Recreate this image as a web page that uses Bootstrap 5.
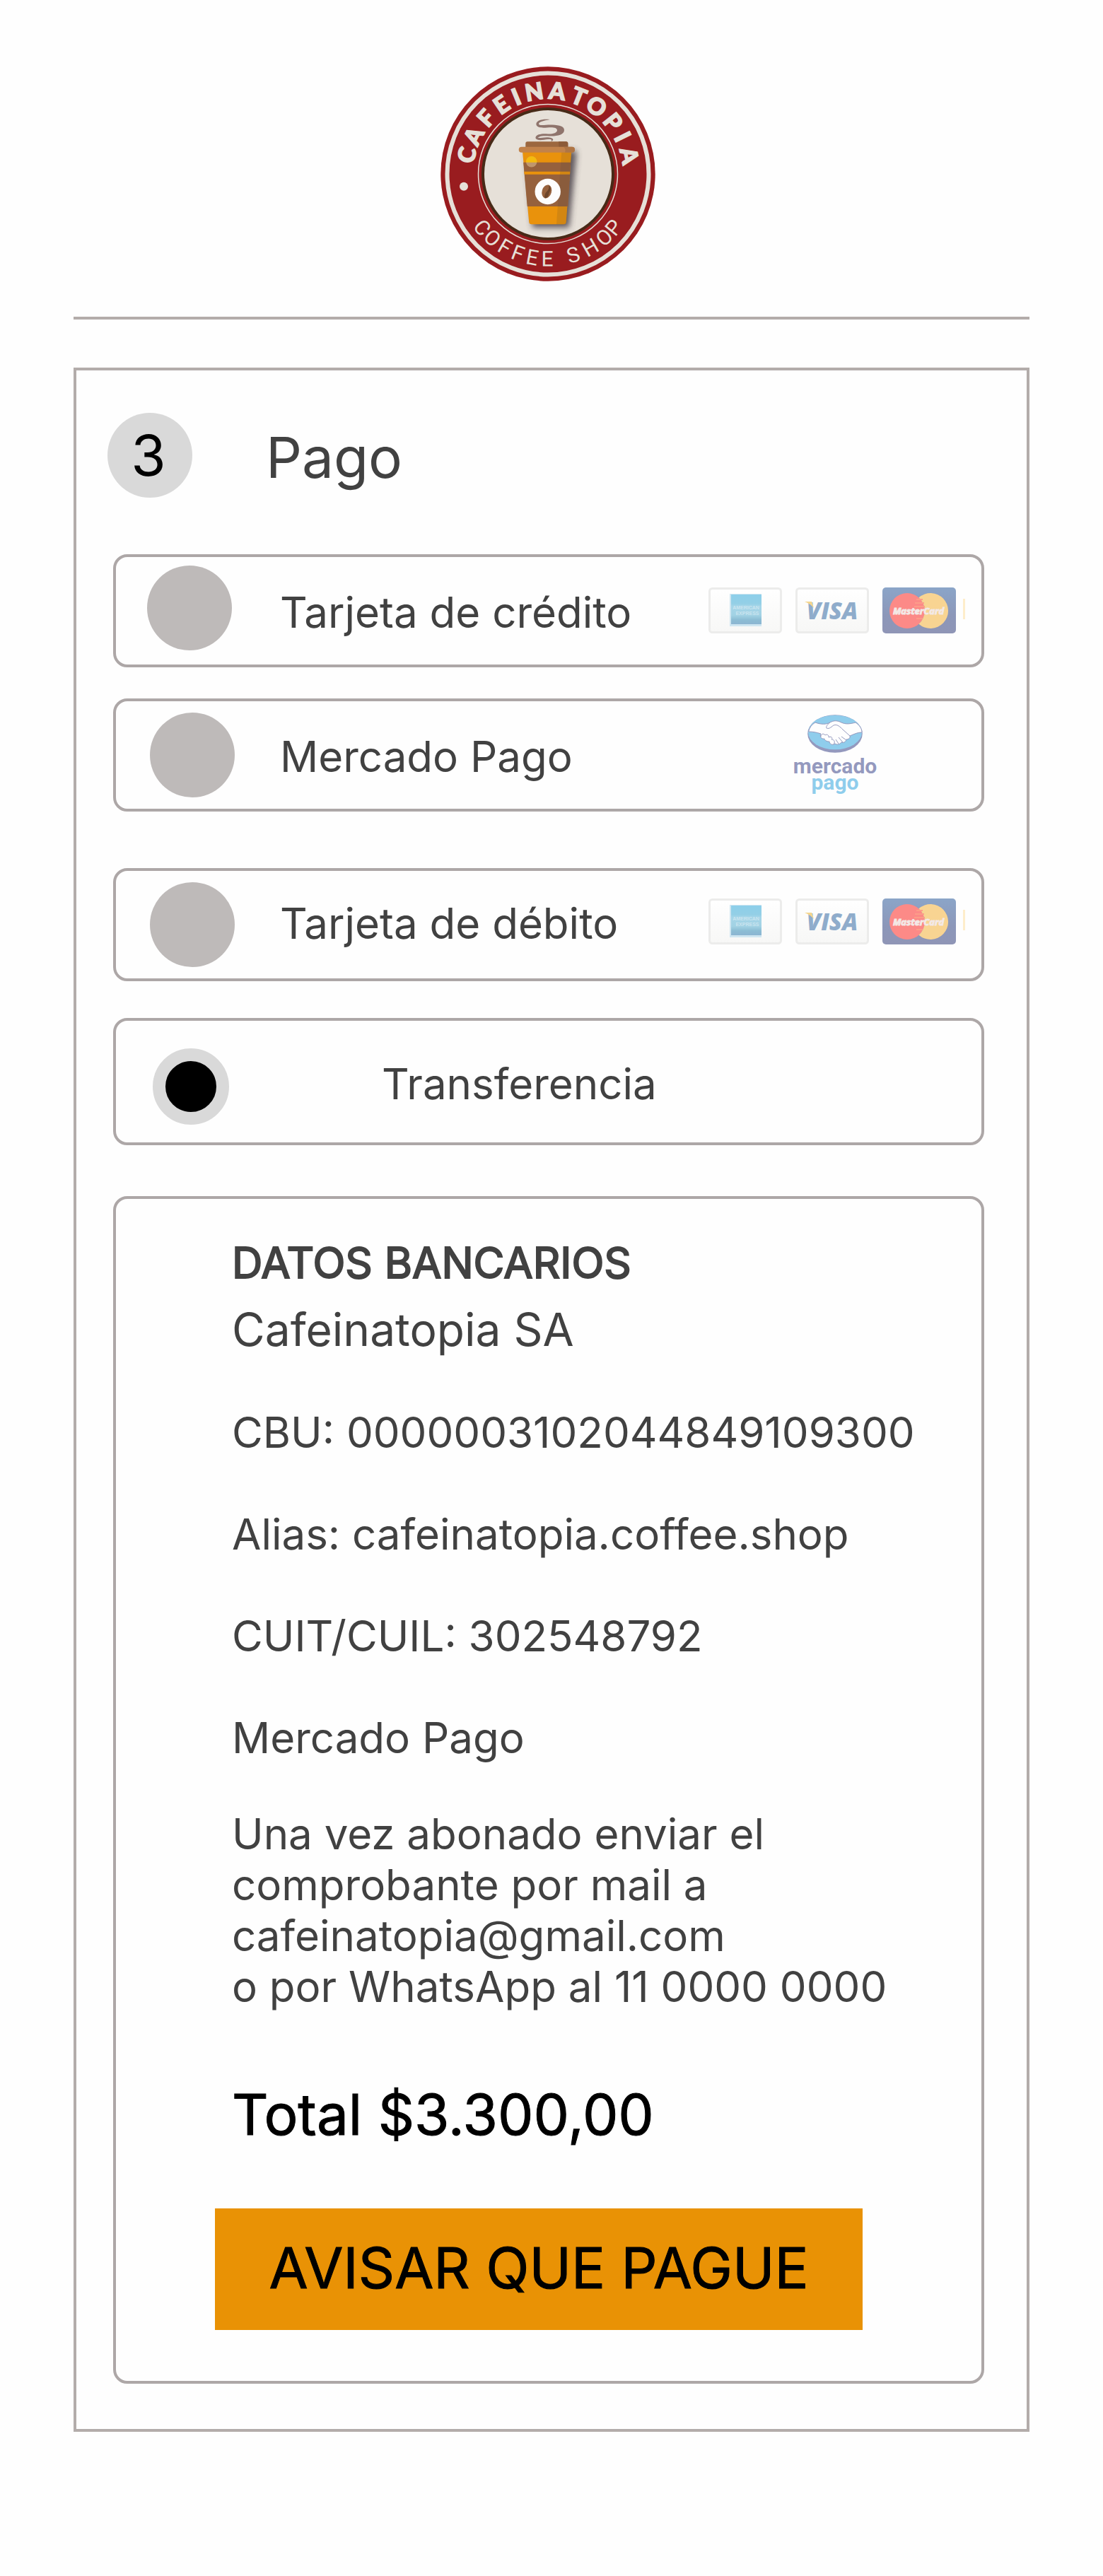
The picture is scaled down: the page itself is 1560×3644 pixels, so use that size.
<!DOCTYPE html>
<html lang="es">
<head>
<meta charset="utf-8">
<meta name="viewport" content="width=device-width, initial-scale=1">
<title>Cafeinatopia - Pago</title>
<link href="https://cdn.jsdelivr.net/npm/bootstrap@5.3.0/dist/css/bootstrap.min.css" rel="stylesheet">
<style>
  body { font-family: Inter, "Liberation Sans", sans-serif; font-size: 60px; line-height: 72px; color: #414141; background: #fefefe; }
  .page { padding: 0 104px 204px; }
  .masthead { padding: 94px 10px 50px 0; border-bottom: 4px solid #b3acaa; margin-bottom: 68px; }
  .brand { width: 304px; height: 304px; }
  .checkout { border: 4px solid #b3acaa; padding: 60px 60px 64px 44px; }
  .step-head { gap: 104px; margin-bottom: 80px; }
  .step-number { width: 120px; height: 120px; background: #d9d9d9; color: #000; font-size: 80px; line-height: 96px; padding-right: 4px; }
  .step-title { font-size: 80px; line-height: 96px; font-weight: 400; padding-top: 6px; }
  .panel { border: 4px solid #ada7a7; border-radius: 20px; margin-left: 8px; }
  .option { height: 160px; padding-left: 44px; padding-right: 22px; margin-bottom: 44px; }
  .option-wide-gap { margin-bottom: 80px; }
  .option-mid-gap { margin-bottom: 52px; }
  .option-active { height: 180px; padding-top: 14px; margin-bottom: 72px; }
  .option-radio { width: 188px; padding-left: 4px; }
  .option-radio-start { padding: 0 0 8px; }
  .option-active .option-radio { width: 332px; padding-left: 8px; }
  .form-check-input.pick { width: 120px; height: 120px; margin: 0; border: 0; background: #bebab9; }
  .form-check-input.pick:checked { width: 108px; height: 108px; border: 18px solid #d9d9d9; background: #000; }
  .cards { width: 364px; height: 66px; }
  .wallet { width: 124px; height: 116px; margin-right: 123px; }
  .bank { padding: 54px 24px 72px 140px; }
  .bank-text { margin-left: 24px; }
  .heavy { -webkit-text-stroke: 1px currentColor; font-weight: 400; }
  .bank h2 { font-size: 60px; line-height: 72px; margin-bottom: 20px; -webkit-text-stroke-width: 2px; }
  .holder { font-size: 64px; line-height: 78px; margin-bottom: 70px; }
  .line { margin-bottom: 72px; }
  .line-last { margin-bottom: 64px; }
  .notice { margin-bottom: 97px; }
  .total { font-size: 80px; line-height: 96px; color: #000; margin-bottom: 85px; }
  .btn.notify { background: #e99205; color: #000; font-size: 80px; line-height: 96px; width: 916px; max-width: 100%; height: 172px; padding: 0 0 4px; border: 0; border-radius: 0; }
</style>
</head>
<body>
<div class="page">
  <header class="masthead d-flex justify-content-center">
    <svg class="brand" viewBox="0 0 304 304" role="img" aria-label="Cafeinatopia Coffee Shop">
      <defs>
        <path id="arcTop" d="M46 152A106 106 0 0 1 258 152"/>
        <path id="arcBottom" d="M21.500 152A130.500 130.500 0 0 0 282.500 152"/>
        <filter id="soft" x="-50%" y="-50%" width="200%" height="200%"><feGaussianBlur stdDeviation="4"/></filter>
        <clipPath id="upper"><rect x="110" y="120" width="50" height="15.700"/></clipPath>
      </defs>
      <circle cx="152" cy="152" r="151.700" fill="#991c1f"/>
      <circle cx="152" cy="152" r="142.500" fill="none" stroke="#e6e0d8" stroke-width="6"/>
      <circle cx="152" cy="152" r="98.500" fill="none" stroke="#e6e0d8" stroke-width="1.500"/>
      <circle cx="152" cy="152" r="92" fill="#e6e0d8" stroke="#472a17" stroke-width="4"/>
      <circle cx="33" cy="169.700" r="6" fill="#e6e0d8"/>
      <text font-family="Lato" font-weight="900" font-size="33" fill="#e6e0d8" stroke="#e6e0d8" stroke-width="1.600" text-anchor="middle"><textPath href="#arcTop"><tspan x="24.2 50.1 77.9 103.6 125 148.6 178.2 206.6 232.5 261.2 283.8 309.3">CAFEINATOPIA</tspan></textPath></text>
      <text font-family="Roboto" font-size="30" fill="#e6e0d8" text-anchor="middle"><textPath href="#arcBottom"><tspan x="89.3 111.8 135.5 157.6 180.6 203.9 223 244.2 272.9 299.3 320.5">COFFEE SHOP</tspan></textPath></text>
      <path d="M121 119H192V128L182 228H130Z" fill="#3d343c" opacity=".8" filter="url(#soft)"/>
      <path d="M154.700 75C146 77 139 78 139 81.500C140 84.500 150 82 158 82.500C169 83 175 85 175 90C175 97 164 99 154 98.500C146 98 140 98.500 137.500 101C142 101.500 148 99.500 154 100.500C160 101.500 161 104 156.500 106C158 103 156 102.800 152 103C146 103.500 137 106 134.500 101.500C134 96 144 94.500 152 95.500C158 96 165 94 165 90.500C165 86 158 86 151 86.500C143 87 136 87 135.300 81.500C136 75 147 74 154.700 75Z" fill="#8f746c"/>
      <path d="M116 120H185.300L177.700 220Q177.500 223.300 174 223.300H129Q125.500 223.300 125.200 220Z" fill="#e9920c"/>
      <path d="M117.200 135.700H184.200L180.300 198H122.700Z" fill="#96613d"/>
      <path d="M118.300 148.700H183.300L183 152.700H118.600Z" fill="#e9920c"/>
      <path d="M171.300 120H185.300L177.700 220Q177.500 223.300 174 223.300H164Z" fill="#4a4038" opacity=".14"/>
      <path d="M120.300 114V109Q120.300 106.300 123 106.300H177.600Q180.300 106.300 180.300 109V114Z" fill="#9c673f"/>
      <path d="M167 106.300H177.600Q180.300 106.300 180.300 109V114H167.500Z" fill="#8c5b38"/>
      <rect x="110.700" y="113.700" width="79.300" height="8" rx="4" fill="#c1824b"/>
      <path d="M174 113.700H186A4 4 0 0 1 186 121.700H176Q178 117 174 113.700Z" fill="#ae7545"/>
      <circle cx="128.700" cy="134.700" r="7.700" fill="#bf966d"/>
      <circle cx="128.700" cy="134.700" r="7.700" fill="#f4ba0e" clip-path="url(#upper)"/>
      <circle cx="151.700" cy="177" r="18.200" fill="#fdfdfd"/>
      <g transform="rotate(16 150.300 176.900)">
        <ellipse cx="150.300" cy="176.900" rx="6.700" ry="9.700" fill="#96613d"/>
        <path d="M150.600 167.200Q153 172 150.300 177T150 186.600Q155 186 154 178Q156 170 150.600 167.200Z" fill="#6d452b"/>
      </g>
    </svg>
  </header>

  <main class="checkout">
    <div class="step-head d-flex align-items-center">
      <span class="step-number rounded-circle d-flex align-items-center justify-content-center flex-shrink-0">3</span>
      <h1 class="step-title mb-0">Pago</h1>
    </div>

    <form>
      <div class="panel option d-flex align-items-center">
        <span class="option-radio option-radio-start d-flex flex-shrink-0"><input class="form-check-input pick" type="radio" name="medio" id="credito"></span>
        <label class="pt-1" for="credito">Tarjeta de crédito</label>
        <svg class="cards ms-auto flex-shrink-0" viewBox="0 0 364 66" aria-hidden="true">
          <defs>
            <linearGradient id="paper" x2="0" y2="1"><stop stop-color="#fff"/><stop offset="1" stop-color="#f7f7f6"/></linearGradient>
            <linearGradient id="amex" x2="0" y2="1"><stop stop-color="#8dcfea"/><stop offset=".3" stop-color="#93cfe6"/><stop offset=".4" stop-color="#a5d5e8"/><stop offset=".7" stop-color="#a2d2e4"/><stop offset=".85" stop-color="#8cbdd4"/><stop offset="1" stop-color="#8cb5d2"/></linearGradient>
            <linearGradient id="mc" x2="0" y2="1"><stop stop-color="#8ba5c8"/><stop offset=".6" stop-color="#8c97b9"/><stop offset="1" stop-color="#8f95b6"/></linearGradient>
            <g id="cardSet">
              <rect x="1.500" y="1.500" width="101" height="62" rx="4" fill="url(#paper)" stroke="#ececeb" stroke-width="3"/>
              <rect x="30" y="9" width="45" height="46" fill="#cfe6f1"/>
              <rect x="32" y="10" width="43" height="42" fill="url(#amex)"/>
              <text x="53" y="31" font-family="Liberation Sans" font-weight="700" font-size="7" fill="#c9e4ef" text-anchor="middle">AMERICAN</text>
              <text x="55" y="39" font-family="Liberation Sans" font-weight="700" font-size="7" fill="#c9e4ef" text-anchor="middle">EXPRESS</text>
              <rect x="124.500" y="1.500" width="101" height="62" rx="4" fill="url(#paper)" stroke="#ececeb" stroke-width="3"/>
              <text x="175" y="45" font-family="Open Sans" font-weight="800" font-style="italic" font-size="33" fill="#8faccb" text-anchor="middle">VISA</text>
              <path d="M136 20H146L149 29Q144 23 136 20Z" fill="#f5d68d"/>
              <rect x="246" y="0" width="104" height="65" rx="5" fill="url(#mc)"/>
              <circle cx="281" cy="33" r="25" fill="#fc8a87"/>
              <path d="M297.500 14.300A25 25 0 1 1 297.500 51.700A25 25 0 0 0 297.500 14.300Z" fill="#f8d492"/>
              <path d="M294 17H303M292 22H305M291 27H306M294 44H303" stroke="#fc9d88" stroke-width="2"/>
              <text x="297" y="38" font-family="Open Sans" font-weight="700" font-style="italic" font-size="13" fill="#f3e9e6" stroke="#f3e9e6" stroke-width="1" text-anchor="middle">MasterCard</text>
              <rect x="360" y="16" width="3" height="29" fill="#feedcb"/>
            </g>
          </defs>
          <use href="#cardSet"/>
        </svg>
      </div>

      <div class="panel option option-wide-gap d-flex align-items-center">
        <span class="option-radio d-flex flex-shrink-0"><input class="form-check-input pick" type="radio" name="medio" id="mercado"></span>
        <label class="pt-1" for="mercado">Mercado Pago</label>
        <svg class="wallet ms-auto flex-shrink-0" viewBox="0 0 124 116" aria-hidden="true">
          <ellipse cx="62" cy="28" rx="38.800" ry="26.800" fill="#9499be"/>
          <ellipse cx="62" cy="26" rx="38" ry="24.300" fill="#8fcdec"/>
          <path d="M34 12C42 15 50 15 55 12C60 9 65 9 71 12C77 15 84 14 91 12C97 16 100 21 100 26C94 26 90 28 83 31C84 34 81 36 78 36C77 40 74 41 71 40C69 43 65 44 62 42C58 45 54 42 54 39C50 39 47 37 47 35C43 36 40 32 42 28C36 26 31 25 24.500 25C26 19 29 15 34 12Z" fill="#fefefe" stroke="#9499be" stroke-width="1"/>
          <path d="M55 12C51 15 49 18 50 20C54 22 58 17 60 16C65 14 69 18 73 22L83 31" fill="#fefefe" stroke="#9499be" stroke-width="1"/>
          <path d="M71 32L78 37M67 33L73 40M63 36L67 42M42 32C42 28 46 27 48 30C50 28 54 30 53 33C57 31 59 34 57 36C62 36 62 41 60 43" fill="none" stroke="#9499be" stroke-width="1"/>
          <text x="62" y="84" font-family="Roboto" font-weight="700" font-size="30" fill="#9499be" text-anchor="middle">mercado</text>
          <text x="62" y="107" font-family="Roboto" font-weight="700" font-size="30" fill="#8fcdec" text-anchor="middle">pago</text>
        </svg>
      </div>

      <div class="panel option option-mid-gap d-flex align-items-center">
        <span class="option-radio d-flex flex-shrink-0"><input class="form-check-input pick" type="radio" name="medio" id="debito"></span>
        <label class="pb-1" for="debito">Tarjeta de débito</label>
        <svg class="cards ms-auto mb-2 flex-shrink-0" viewBox="0 0 364 66" aria-hidden="true"><use href="#cardSet"/></svg>
      </div>

      <div class="panel option option-active d-flex align-items-center">
        <span class="option-radio d-flex flex-shrink-0"><input class="form-check-input pick" type="radio" name="medio" id="transferencia" checked></span>
        <label class="pb-2" for="transferencia">Transferencia</label>
      </div>

      <section class="panel bank">
        <div class="bank-text">
          <h2 class="heavy">DATOS BANCARIOS</h2>
          <p class="holder">Cafeinatopia SA</p>
          <p class="line">CBU: 0000003102044849109300</p>
          <p class="line">Alias: cafeinatopia.coffee.shop</p>
          <p class="line">CUIT/CUIL: 302548792</p>
          <p class="line line-last">Mercado Pago</p>
          <p class="notice">Una vez abonado enviar el<br>comprobante por mail a<br><a class="text-reset text-decoration-none" href="mailto:cafeinatopia@gmail.com">cafeinatopia@gmail.com</a><br>o por WhatsApp al 11 0000 0000</p>
          <p class="total heavy">Total $3.300,00</p>
        </div>
        <button type="button" class="btn notify heavy d-block">AVISAR QUE PAGUE</button>
      </section>
    </form>
  </main>
</div>
<script src="https://cdn.jsdelivr.net/npm/bootstrap@5.3.0/dist/js/bootstrap.bundle.min.js"></script>
</body>
</html>
